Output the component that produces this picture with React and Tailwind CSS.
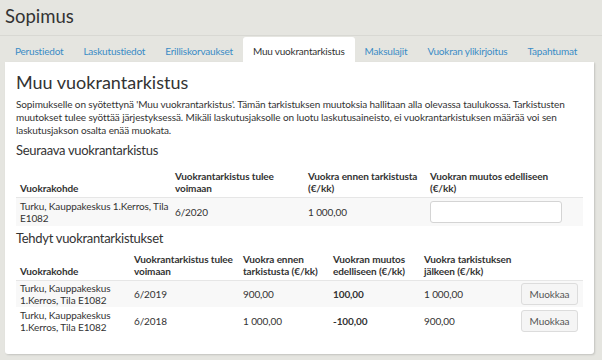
import React from 'react';

const tabs = [
  'Perustiedot',
  'Laskutustiedot',
  'Erilliskorvaukset',
  'Muu vuokrantarkistus',
  'Maksulajit',
  'Vuokran ylikirjoitus',
  'Tapahtumat',
];

const done = [
  { date: '6/2019', before: '900,00', change: '100,00', after: '1 000,00' },
  { date: '6/2018', before: '1 000,00', change: '-100,00', after: '900,00' },
];

const App = () => {
  return (
    <div className="w-[602px] h-[360px] overflow-hidden bg-[#e5e5e0] text-[#333] font-['Lato',sans-serif]">
      {/* Otsikko */}
      <div className="h-[36px] px-[5px] pt-[4px] text-[18.5px] leading-[24px] border-b border-[#d8d8d3]">Sopimus</div>

      {/* Välilehdet */}
      <div className="flex pl-[5px] pt-[1px] h-[26px]">
        {tabs.map((t) => (
          <div
            key={t}
            className={
              t === 'Muu vuokrantarkistus'
                ? 'shrink-0 whitespace-nowrap px-[10px] pt-[8px] text-[10px] leading-[13px] tracking-[-0.2px] bg-white rounded-t-[3px] text-[#333]'
                : 'shrink-0 whitespace-nowrap px-[10px] pt-[8px] text-[10px] leading-[13px] tracking-[-0.2px] text-[#3a8cc6]'
            }
          >
            {t}
          </div>
        ))}
      </div>

      {/* Kortti */}
      <div className="mx-[5px] w-[589px] h-[292px] bg-white rounded-b-[3px] shadow-[1px_1px_2px_rgba(0,0,0,0.15)] px-[11px] pt-[8px]">
        <h1 className="text-[18px] leading-[24px]">Muu vuokrantarkistus</h1>
        <p className="mt-[4px] text-[10px] leading-[13px] tracking-[-0.1px] whitespace-nowrap">
          Sopimukselle on syötettynä 'Muu vuokrantarkistus'. Tämän tarkistuksen muutoksia hallitaan alla olevassa taulukossa. Tarkistusten
          <br />
          muutokset tulee syöttää järjestyksessä. Mikäli laskutusjaksolle on luotu laskutusaineisto, ei vuokrantarkistuksen määrää voi sen
          <br />
          laskutusjakson osalta enää muokata.
        </p>

        <h2 className="mt-[5px] text-[13px] leading-[16px] tracking-[-0.3px]">Seuraava vuokrantarkistus</h2>
        <table className="mt-[12px] w-[567px] text-[10px] leading-[12px] tracking-[-0.1px] border-collapse table-fixed">
          <colgroup>
            <col className="w-[155px]" />
            <col className="w-[133px]" />
            <col className="w-[122px]" />
            <col />
          </colgroup>
          <thead>
            <tr className="border-b border-[#e6e6e6] font-bold text-left align-bottom">
              <th className="px-[4px] pb-[3px]">Vuokrakohde</th>
              <th className="px-[4px] pb-[3px]">Vuokrantarkistus tulee voimaan</th>
              <th className="px-[4px] pb-[3px]">Vuokra ennen tarkistusta (€/kk)</th>
              <th className="px-[4px] pb-[3px]">
                <div className="w-[130px]">Vuokran muutos edelliseen (€/kk)</div>
              </th>
            </tr>
          </thead>
          <tbody>
            <tr className="bg-[#f8f8f8] h-[28px]">
              <td className="pl-[4px] pr-0">Turku, Kauppakeskus 1.Kerros, Tila E1082</td>
              <td className="px-[4px]">6/2020</td>
              <td className="px-[4px]">1 000,00</td>
              <td className="px-[4px]">
                <input className="block w-[132px] h-[22px] bg-white border border-[#d4d4d4] rounded-[3px]" />
              </td>
            </tr>
          </tbody>
        </table>

        <h2 className="mt-[4px] text-[13px] leading-[16px] tracking-[-0.3px]">Tehdyt vuokrantarkistukset</h2>
        <table className="mt-[7px] w-[567px] text-[10px] leading-[12px] tracking-[-0.1px] border-collapse table-fixed">
          <colgroup>
            <col className="w-[114px]" />
            <col className="w-[109px]" />
            <col className="w-[90px]" />
            <col className="w-[91px]" />
            <col className="w-[99px]" />
            <col />
          </colgroup>
          <thead>
            <tr className="border-b border-[#e6e6e6] font-bold text-left align-bottom">
              <th className="px-[4px] pb-[3px]">Vuokrakohde</th>
              <th className="px-[4px] pb-[3px]">Vuokrantarkistus tulee voimaan</th>
              <th className="px-[4px] pb-[3px]">Vuokra ennen tarkistusta (€/kk)</th>
              <th className="px-[4px] pb-[3px]">Vuokran muutos edelliseen (€/kk)</th>
              <th className="px-[4px] pb-[3px]">Vuokra tarkistuksen jälkeen (€/kk)</th>
              <th />
            </tr>
          </thead>
          <tbody>
            {done.map((r, i) => (
              <tr key={r.date} className={i === 0 ? 'bg-[#f8f8f8] h-[27px]' : 'h-[27px]'}>
                <td className="px-[4px]">Turku, Kauppakeskus 1.Kerros, Tila E1082</td>
                <td className="px-[4px]">{r.date}</td>
                <td className="px-[4px]">{r.before}</td>
                <td className="px-[4px] font-bold">{r.change}</td>
                <td className="px-[4px]">{r.after}</td>
                <td className="pl-[2px] pr-[3px]">
                  <button className="w-[57px] h-[22px] bg-[#f5f5f5] border border-[#dcdcdc] rounded-[3px] text-[10px] text-[#555]">
                    Muokkaa
                  </button>
                </td>
              </tr>
            ))}
          </tbody>
        </table>
      </div>
    </div>
  );
};

export default App;
